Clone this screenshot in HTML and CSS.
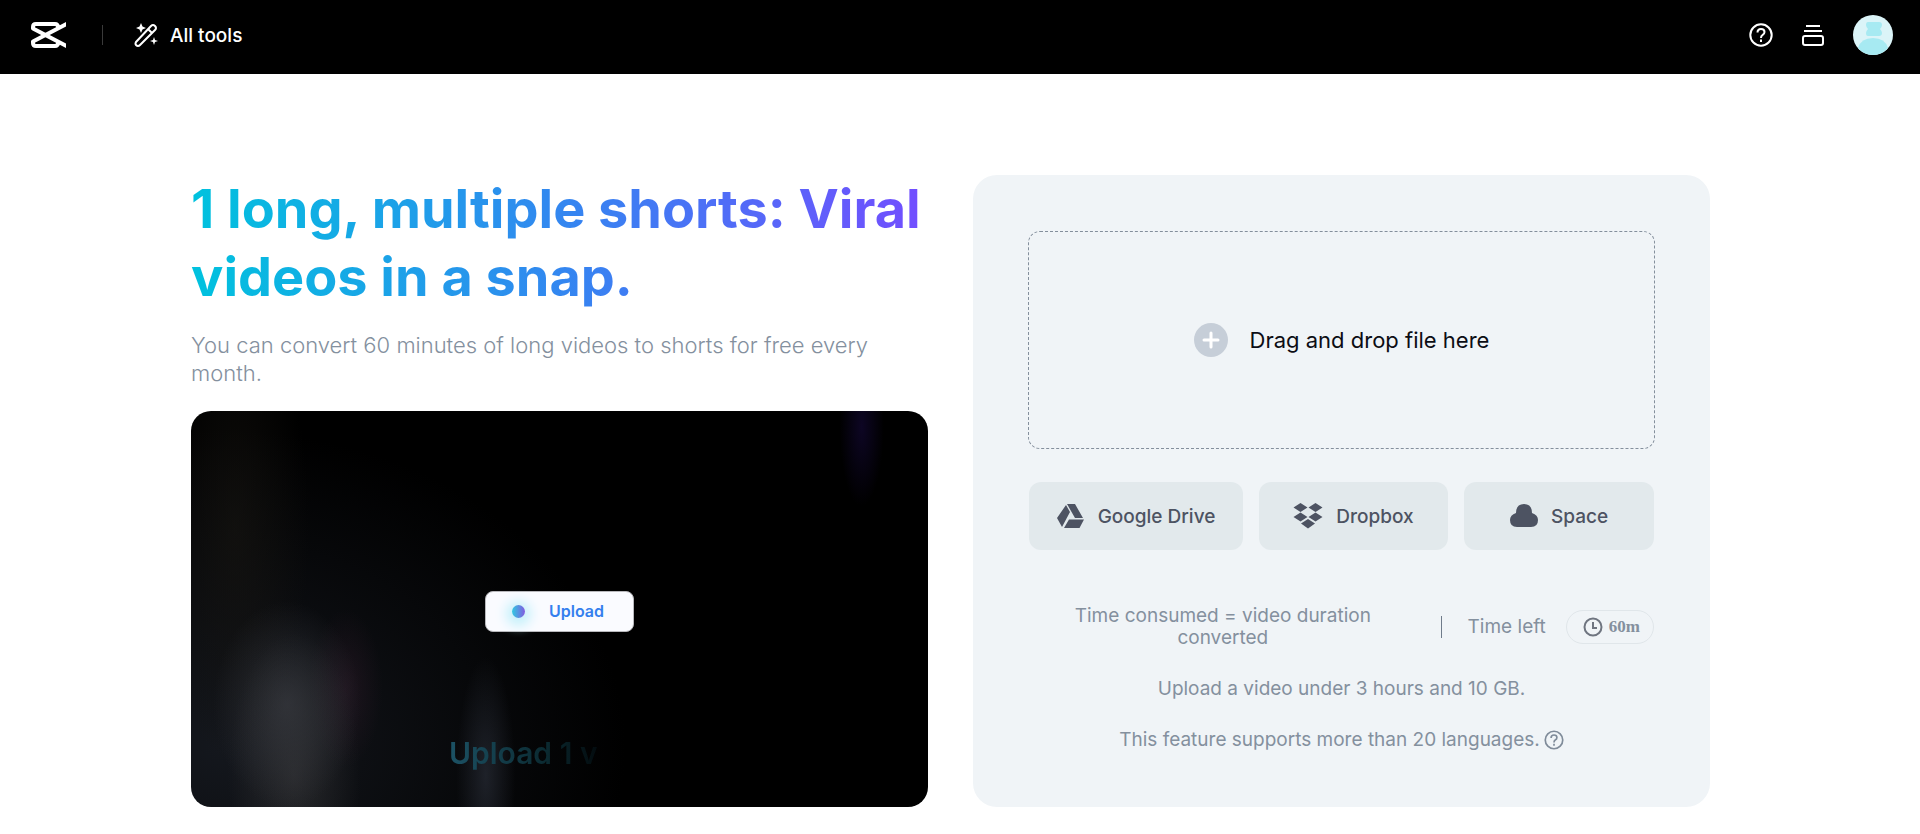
FILE: index.html
```
<!DOCTYPE html>
<html lang="en">
<head>
    <meta charset="UTF-8">
    <meta name="viewport" content="width=device-width, initial-scale=1.0">
    <title>Long video to shorts</title>
    <link rel="stylesheet" href="styles.css">
</head>
<body>
    <header class="header">
        <a class="logo" href="#" aria-label="Home">
            <svg width="36" height="28" viewBox="0 0 36 28" fill="none" stroke="#fff" stroke-width="4" stroke-linejoin="round">
                <path d="M42 0L3 20.500V22Q3 25 6 25H25Q28 25 28.500 21"/>
                <path d="M42 28L3 7.500V6Q3 3 6 3H25Q28 3 28.500 7"/>
            </svg>
        </a>
        <span class="divider"></span>
        <a class="all-tools" href="#">
            <svg width="24" height="24" viewBox="0 0 24 24" fill="none" stroke="#fff" stroke-width="2" stroke-linejoin="round">
                <path d="M2 19L17 3Q19 1 21 3Q23 5 21 7L6 22Q4 24 2 22Q1 21 2 19ZM14 6L18 10"/>
                <path d="M7 0L8.500 3.500L12 5L8.500 6.500L7 10L5.500 6.500L2 5L5.500 3.500ZM20 14L21 17L24 18L21 19L20 22L19 19L16 18L19 17Z" fill="#fff" stroke="none"/>
            </svg>
            All tools
        </a>
        <nav class="header-right">
            <button class="icon-btn" aria-label="Help">
                <svg width="24" height="24" viewBox="0 0 24 24" fill="none" stroke="#fff" stroke-width="2">
                    <circle cx="12" cy="12" r="10.700"/>
                    <path d="M8.500 9.500Q8.500 6 12 6Q15.500 6 15.500 9Q15.500 11 13.500 12Q12 13 12 15M12 16.500V19"/>
                </svg>
            </button>
            <button class="icon-btn" aria-label="Projects">
                <svg width="24" height="24" viewBox="0 0 24 24" fill="none" stroke="#fff" stroke-width="2">
                    <path d="M5 3H19M3 8H21"/>
                    <rect x="2" y="13" width="20" height="9" rx="2"/>
                </svg>
            </button>
            <button class="avatar" aria-label="Account">
                <svg width="40" height="40" viewBox="0 0 40 40">
                    <circle cx="20" cy="20" r="20" fill="#dbf4f8"/>
                    <path d="M15 7H26Q29 7 29 10Q29 12 27 14Q29 16 29 18Q29 21 26 21H15Q13 21 13 18Q13 16 15 14Q13 12 13 10Q13 7 15 7Z" fill="#a7eaf2"/>
                    <path d="M5 33Q8 23 20 23Q32 23 35 33Q29 40 20 40Q11 40 5 33Z" fill="#a7eaf2"/>
                </svg>
            </button>
        </nav>
    </header>

    <main class="main">
        <section class="intro">
            <h1>1 long, multiple shorts: Viral videos in a snap.</h1>
            <p class="subtitle">You can convert 60 minutes of long videos to shorts for free every month.</p>
            <div class="video">
                <div class="video-upload"><span class="dot"></span>Upload</div>
                <div class="caption">Upload 1 v</div>
            </div>
        </section>

        <section class="panel">
            <button class="dropzone">
                <svg width="34" height="34" viewBox="0 0 34 34">
                    <circle cx="17" cy="17" r="17" fill="#c6ced8"/>
                    <path d="M17 10V24M10 17H24" stroke="#fff" stroke-width="3" stroke-linecap="round"/>
                </svg>
                Drag and drop file here
            </button>
            <div class="sources">
                <button class="source drive">
                    <svg width="28" height="28" viewBox="0 0 28 28" fill="#4d5362">
                        <path d="M10 2H18L26 16H18ZM9 3L13 10L5 25L0 16ZM12 17.500H27L22.500 26H7Z"/>
                    </svg>
                    Google Drive
                </button>
                <button class="source">
                    <svg width="30" height="28" viewBox="0 0 30 28" fill="#4d5362">
                        <path d="M7.500 1L14.500 5.500L7.500 10L0.500 5.500ZM22.500 1L29.500 5.500L22.500 10L15.500 5.500ZM7.500 10.500L14.500 15L7.500 19.500L0.500 15ZM22.500 10.500L29.500 15L22.500 19.500L15.500 15ZM15 17L22 21.500L15 26.500L8 21.500Z"/>
                    </svg>
                    Dropbox
                </button>
                <button class="source">
                    <svg width="28" height="28" viewBox="0 0 28 28" fill="#4d5362">
                        <path d="M6 11Q6 2 14 2Q22 2 22 11Q28 13 28 18Q28 25 21 25H7Q0 25 0 18Q0 13 6 11Z"/>
                    </svg>
                    Space
                </button>
            </div>
            <div class="quota">
                <p class="quota-rule">Time consumed = video duration converted</p>
                <span class="quota-line"></span>
                <span>Time left</span>
                <span class="badge">
                    <svg width="20" height="20" viewBox="0 0 20 20" fill="none" stroke="#6f7580" stroke-width="2">
                        <circle cx="10" cy="10" r="8.500"/>
                        <path d="M10 5V11H14"/>
                    </svg>
                    60m
                </span>
            </div>
            <p class="note">Upload a video under 3 hours and 10 GB.</p>
            <p class="note">
                This feature supports more than 20 languages.
                <svg width="20" height="20" viewBox="0 0 24 24" fill="none" stroke="#7f8b99" stroke-width="2">
                    <circle cx="12" cy="12" r="10.500"/>
                    <path d="M8.500 9.500Q8.500 6 12 6Q15.500 6 15.500 9Q15.500 11 13.500 12Q12 13 12 15M12 16.500V19"/>
                </svg>
            </p>
        </section>
    </main>
</body>
</html>
```
FILE: styles.css
```
* {
    box-sizing: border-box;
}
body {
    margin: 0;
    background-color: #fff;
    font-family: Inter, "Liberation Sans", sans-serif;
}
h1, p {
    margin: 0;
}
button {
    border: none;
    background: none;
    padding: 0;
    font-family: inherit;
    cursor: pointer;
}
svg {
    display: block;
    flex-shrink: 0;
}

/* header */
.header {
    display: flex;
    align-items: center;
    height: 74px;
    padding: 0 27px 4px 30px;
    background-color: #000;
}
.divider {
    width: 1px;
    height: 20px;
    margin: 0 31px 0 36px;
    background-color: #3a3a3a;
}
.all-tools {
    display: flex;
    align-items: center;
    gap: 12px;
    color: #fff;
    font-size: 19px;
    font-weight: 500;
    text-decoration: none;
}
.header-right {
    display: flex;
    align-items: center;
    gap: 28px;
    margin-left: auto;
}

/* content */
.main {
    display: grid;
    grid-template-columns: 1fr 1fr;
    gap: 45px;
    padding: 101px 210px 27px 191px;
}
.intro {
    display: flex;
    flex-direction: column;
}
h1 {
    font-size: 54px;
    line-height: 68px;
    font-weight: 700;
    color: transparent;
    background: linear-gradient(90deg, #00c2de, #3387f0 50%, #734dff);
    -webkit-background-clip: text;
    background-clip: text;
}
.subtitle {
    margin: 20px 0 24px;
    color: #84909e;
    font-size: 22px;
    line-height: 28px;
    font-weight: 300;
}
.video {
    position: relative;
    display: flex;
    align-items: center;
    justify-content: center;
    flex: 1;
    min-height: 396px;
    border-radius: 20px;
    overflow: hidden;
    background:
        radial-gradient(ellipse 10% 26% at 13% 74%, rgba(62, 64, 70, 0.6), transparent),
        radial-gradient(ellipse 9% 36% at 14% 92%, rgba(56, 56, 58, 0.6), transparent),
        radial-gradient(ellipse 5% 20% at 21% 70%, rgba(54, 28, 46, 0.4), transparent),
        radial-gradient(ellipse 4% 30% at 40% 92%, rgba(40, 44, 54, 0.7), transparent),
        radial-gradient(ellipse 3% 20% at 91% 4%, rgba(22, 10, 60, 0.6), transparent),
        radial-gradient(ellipse 10% 60% at 6% 30%, rgba(24, 22, 18, 0.6), transparent),
        radial-gradient(ellipse 55% 80% at 4% 85%, #14171d, transparent),
        #000;
}
.video-upload {
    display: flex;
    align-items: center;
    gap: 24px;
    width: 149px;
    height: 41px;
    margin-top: 4px;
    padding-left: 26px;
    border: 1px solid #b8b8bc;
    border-radius: 8px;
    background-color: #fafbff;
    color: #347fee;
    font-size: 16px;
    font-weight: 600;
}
.dot {
    width: 13px;
    height: 13px;
    border-radius: 50%;
    background: linear-gradient(90deg, #30c9e2, #805ce0);
    box-shadow: 0 2px 12px 6px #c5f1fb;
}
.caption {
    position: absolute;
    left: 35%;
    bottom: 36px;
    font-size: 30px;
    font-weight: 600;
    color: transparent;
    background: linear-gradient(90deg, #1c5265, #0b2a31 65%, #030b0e);
    -webkit-background-clip: text;
    background-clip: text;
}

/* upload panel */
.panel {
    display: flex;
    flex-direction: column;
    padding: 56px 55px;
    border-radius: 24px;
    background-color: #f0f4f7;
    color: #84909e;
    font-size: 19px;
    line-height: 22px;
    font-weight: 400;
}
.dropzone {
    display: flex;
    align-items: center;
    justify-content: center;
    gap: 22px;
    height: 218px;
    border: 1px dashed #848f9c;
    border-radius: 12px;
    color: #0c0d14;
    font-size: 22px;
}
.sources {
    display: grid;
    grid-template-columns: 214fr 189fr 190fr;
    gap: 16px;
    margin: 33px 1px 0;
}
.source {
    display: flex;
    align-items: center;
    justify-content: center;
    gap: 13px;
    height: 68px;
    border-radius: 12px;
    background-color: #e2e9ec;
    color: #4d5362;
    font-size: 19px;
    font-weight: 500;
}
.quota {
    display: flex;
    align-items: center;
    margin: 55px 1px 0;
}
.quota-rule {
    flex: 1;
    padding: 0 30px 0 6px;
    text-align: center;
}
.quota-line {
    width: 1px;
    height: 22px;
    margin-right: 26px;
    background-color: #6f7b8a;
}
.badge {
    display: flex;
    align-items: center;
    gap: 6px;
    margin-left: 20px;
    padding: 5px 13px 5px 16px;
    border: 1px solid #e0e6ea;
    border-radius: 17px;
    color: #84909e;
    font-family: "Liberation Serif", serif;
    font-size: 17px;
    font-weight: 700;
}
.note {
    display: flex;
    align-items: center;
    justify-content: center;
    gap: 4px;
    margin-top: 29px;
}
```
